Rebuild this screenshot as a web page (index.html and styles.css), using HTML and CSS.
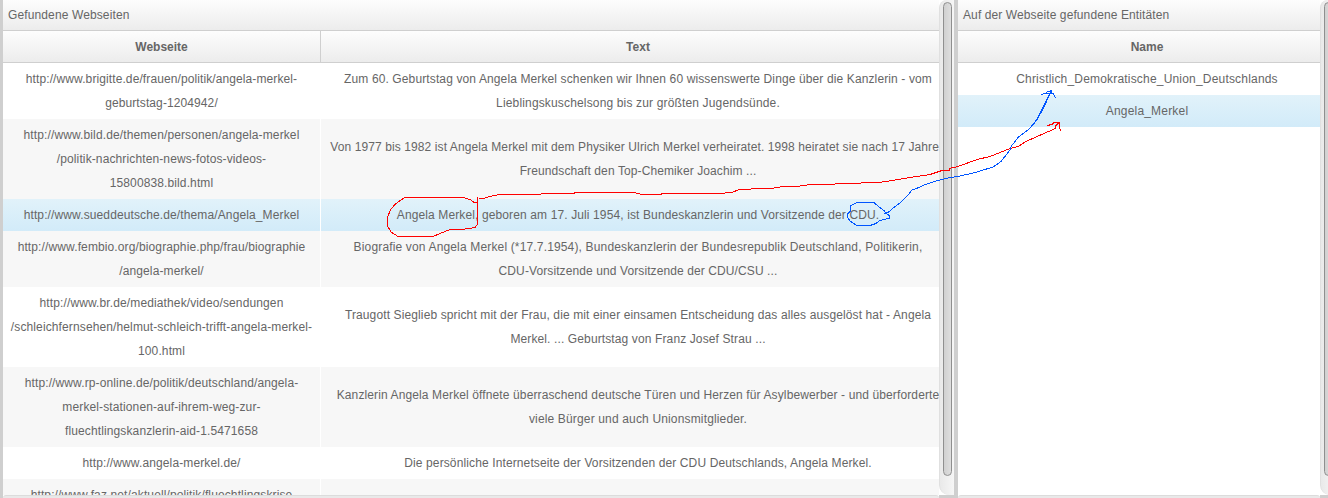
FILE: index.html
```html
<!DOCTYPE html>
<html lang="de">
<head>
<meta charset="utf-8">
<title>Gefundene Webseiten</title>
<link rel="stylesheet" href="styles.css">
</head>
<body>
<main class="workspace">
  <section class="pane pane-sites">
    <div class="view">
      <h2 class="title">Gefundene Webseiten</h2>
      <div class="row head"><div class="cell">Webseite</div><div class="cell">Text</div></div>
      <div class="row"><div class="cell snug">http://www.brigitte.de/frauen/politik/angela-merkel-<br>geburtstag-1204942/</div><div class="cell"><span>Zum 60. Geburtstag von Angela Merkel schenken wir Ihnen 60 wissenswerte Dinge über die Kanzlerin - vom</span><span class="loose">Lieblingskuschelsong bis zur größten Jugendsünde.</span></div></div>
      <div class="row odd"><div class="cell">http://www.bild.de/themen/personen/angela-merkel<br>/politik-nachrichten-news-fotos-videos-<br>15800838.bild.html</div><div class="cell snug">Von 1977 bis 1982 ist Angela Merkel mit dem Physiker Ulrich Merkel verheiratet. 1998 heiratet sie nach 17 Jahren<br>Freundschaft den Top-Chemiker Joachim ...</div></div>
      <div class="row selected"><div class="cell">http://www.sueddeutsche.de/thema/Angela_Merkel</div><div class="cell">Angela Merkel, geboren am 17. Juli 1954, ist Bundeskanzlerin und Vorsitzende der CDU.</div></div>
      <div class="row odd"><div class="cell">http://www.fembio.org/biographie.php/frau/biographie<br>/angela-merkel/</div><div class="cell"><span class="loose">Biografie von Angela Merkel (*17.7.1954), Bundeskanzlerin der Bundesrepublik Deutschland, Politikerin,</span><span class="snug">CDU-Vorsitzende und Vorsitzende der CDU/CSU ...</span></div></div>
      <div class="row"><div class="cell">http://www.br.de/mediathek/video/sendungen<br>/schleichfernsehen/helmut-schleich-trifft-angela-merkel-<br>100.html</div><div class="cell">Traugott Sieglieb spricht mit der Frau, die mit einer einsamen Entscheidung das alles ausgelöst hat - Angela<br>Merkel. ... Geburtstag von Franz Josef Strau ...</div></div>
      <div class="row odd"><div class="cell">http://www.rp-online.de/politik/deutschland/angela-<br>merkel-stationen-auf-ihrem-weg-zur-<br>fluechtlingskanzlerin-aid-1.5471658</div><div class="cell"><span>Kanzlerin Angela Merkel öffnete überraschend deutsche Türen und Herzen für Asylbewerber - und überforderte</span><span class="loose">viele Bürger und auch Unionsmitglieder.</span></div></div>
      <div class="row"><div class="cell">http://www.angela-merkel.de/</div><div class="cell">Die persönliche Internetseite der Vorsitzenden der CDU Deutschlands, Angela Merkel.</div></div>
      <div class="row odd"><div class="cell">http://www.faz.net/aktuell/politik/fluechtlingskrise</div><div class="cell"></div></div>
    </div>
    <div class="vbar"><div class="track"><div class="thumb"></div></div></div>
    <div class="hbar"><div class="htrack"></div></div>
    <div class="corner"></div>
  </section>
  <section class="pane pane-entities">
    <div class="view">
      <h2 class="title snug">Auf der Webseite gefundene Entitäten</h2>
      <div class="row head"><div class="cell">Name</div></div>
      <div class="row"><div class="cell wide">Christlich_Demokratische_Union_Deutschlands</div></div>
      <div class="row selected"><div class="cell wide">Angela_Merkel</div></div>
    </div>
    <div class="vbar"><div class="track"><div class="thumb"></div></div></div>
    <div class="hbar"><div class="htrack"></div></div>
    <div class="corner"></div>
  </section>
</main>
<svg class="ink" width="1328" height="498" viewBox="0 0 1328 498">
  <g class="red">
    <path d="M477.5 197V224L475 227.5L462 229.5H450L440 233.5L433 236.5H398L391 232L387.5 226V217L391 209L396 203.500L404.500 197.500H463L471 200L474 202.500H477.500"/>
    <path d="M479 198.500H483L490 196.500L499 194.500H540L542 193.500H573L576 192.500H634L642 194.500H661V193.500H724L726 192.500H732L739 189.500H750L752 188.500H771L783 186.500H796L811 184.500H834L836 183.500H860L862 182.500H879L892 180.500L910 177.500L930 174.500L942 170.500H949V168.500L958 166.500L977 159.500L990 156.500L1010 148.500L1018 146.500L1026 141.500L1046 132.500L1050 131L1055.500 128.500V126L1059 122.500"/>
    <path d="M1047 125.500L1052 124.500L1054 122.500H1059.500V126L1060.500 131"/>
  </g>
  <g class="blue">
    <path d="M857 202.500H874L879 207L884 210.500L886 213L889.500 216V218L880 220.500L876 223.500L870 225.500H857L850 221L847.500 217V214L850.500 211V206L857 202.500M884 214L888 212"/>
    <path d="M886 214L890 211L895 206.500L900 203L908 195L912 190L919 187.500L925 184.500L938 180.500L950 177.500L958 176.500L975 172.500L993 167L1001 161.500L1010 150L1011.500 146L1018 137.500L1029 129L1037 120"/>
    <path class="bold" d="M1036 121L1041 112L1046 102L1051 91"/>
    <path d="M1041 94.500L1045 93.500H1053L1055.500 98M1046 92.500L1051.500 90.500V93"/>
  </g>
</svg>
</body>
</html>
```
FILE: styles.css
```css
* { box-sizing: border-box; }
html, body { height: 100%; }
body {
  margin: 0;
  overflow: hidden;
  background: #cfcfcf;
  color: #666;
  font: 12px/24px "Liberation Sans", Arial, sans-serif;
  letter-spacing: 0.12px;
}
.workspace {
  display: flex;
  gap: 4px;
  height: 498px;
  padding-left: 3px;
  width: 1339px;
}
.pane {
  display: grid;
  grid-template-rows: 495px 3px;
  flex: none;
}
.pane-sites { grid-template-columns: 936px 15px; }
.pane-entities { grid-template-columns: 362px 15px; }
.view { overflow: hidden; background: #fff; }
.title {
  margin: 0;
  height: 31px;
  padding: 3px 5px;
  border-bottom: 1px solid #cfcfcf;
  background: linear-gradient(#fdfdfd, #ececec);
  font-size: 12px;
  font-weight: normal;
}
.row {
  display: grid;
  text-align: center;
  white-space: nowrap;
}
.pane-sites .row { grid-template-columns: 318px 634px; width: 952px; }
.pane-entities .row { width: 378px; }
.cell {
  display: flex;
  flex-direction: column;
  justify-content: center;
  min-height: 32px;
  padding: 4px 0;
}
.snug { letter-spacing: 0.1px; }
.loose { letter-spacing: 0.155px; }
.wide { letter-spacing: 0.19px; }
.pane-sites .cell:first-child { border-right: 1px solid #fff; }
.odd { background: #f7f7f7; }
.selected { background: linear-gradient(#e1f2fa, #d2ebf9); }
.head {
  border-bottom: 1px solid #cfcfcf;
  background: linear-gradient(#fdfdfd, #ececec);
  font-weight: bold;
  letter-spacing: 0;
}
.head .cell { min-height: 31px; padding: 4px 0 3px; }
.pane-sites .head .cell:first-child { border-right-color: #cfcfcf; }
.vbar { background: #fff; }
.track {
  height: 495px;
  padding: 2px 2px 19px 3px;
  border: solid #e0e0e0;
  border-width: 0 0 0 1px;
  border-radius: 8px 0 0 10px;
  background: linear-gradient(90deg, #e9e9e9, #f6f6f6);
}
.thumb {
  width: 9px;
  height: 474px;
  border: 1px solid #8f8f8f;
  border-radius: 5px;
  background: linear-gradient(90deg, #d0d0d0, #dedede);
}
.hbar { background: #fff; }
.htrack {
  height: 3px;
  border-top: 1px solid #dcdcdc;
  border-radius: 6px 6px 0 0;
  background: #e9e9e9;
}
.corner { background: #cfcfcf; }
.ink {
  position: absolute;
  left: 0;
  top: 0;
  fill: none;
  shape-rendering: crispEdges;
}
.red { stroke: #f00; }
.blue { stroke: #0055ff; }
.bold { stroke-width: 1.4; }
```
